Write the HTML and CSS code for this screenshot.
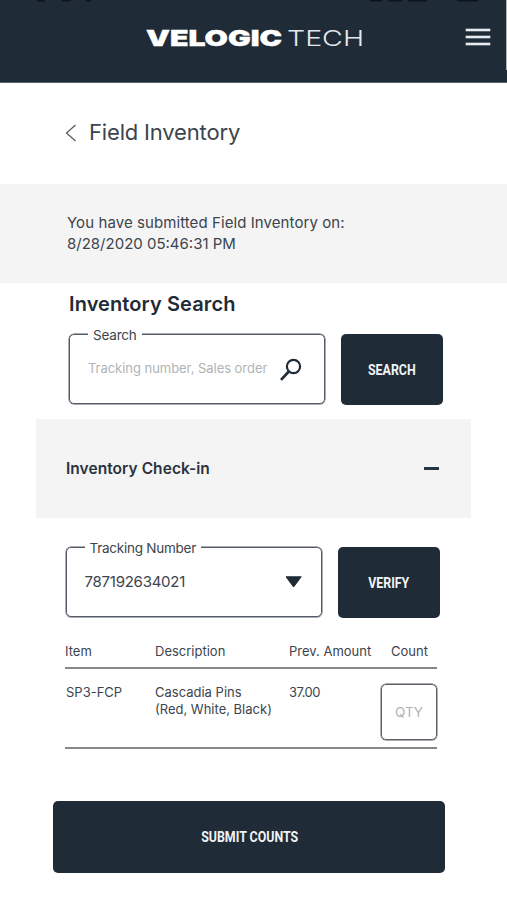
FILE: index.html
```html
<!DOCTYPE html>
<html lang="en">
<head>
<meta charset="utf-8">
<title>Velogic Tech – Field Inventory</title>
<link rel="stylesheet" href="styles.css">
</head>
<body>
<header class="topbar">
  <svg class="status" width="507" height="2" viewBox="0 0 507 2" aria-hidden="true"><path d="M37 0h8M62 0h9M86 0h5M370 0h12M388 0h14M408 0h19M457 0h21"/></svg>
  <svg class="logo" width="224" height="36" viewBox="0 0 224 36">
    <text class="logo-bold" x="1" y="25.5" textLength="136" lengthAdjust="spacingAndGlyphs">VELOGIC</text>
    <text class="logo-light" x="142" y="25.5" textLength="77" lengthAdjust="spacingAndGlyphs">TECH</text>
  </svg>
  <button class="menu" aria-label="Menu"><i></i><i></i><i></i></button>
</header>
<div class="title">
  <svg width="12" height="18" viewBox="0 0 12 18"><path d="M10.5 1L1.5 9l9 8" fill="none" stroke="#555c63" stroke-width="1.3"/></svg>
  <h1>Field Inventory</h1>
</div>
<div class="notice"><p>You have submitted Field Inventory on:<br><span class="date">8/28/2020 05:46:31 PM</span></p></div>
<main>
  <h2>Inventory Search</h2>
  <div class="row search">
    <div class="field">
      <label class="label-search">Search</label>
      <span class="placeholder">Tracking number, Sales order</span>
      <svg class="lens" width="24" height="24" viewBox="0 0 24 24" fill="none" stroke="#1f2b36"><circle cx="14.5" cy="8.5" r="6.6" stroke-width="2.2"/><path d="M9.8 13.5L2 21.8" stroke-width="2.7"/></svg>
    </div>
    <button class="btn"><span>SEARCH</span></button>
  </div>
  <section class="accordion"><h3>Inventory Check-in</h3><i class="minus"></i></section>
  <div class="row verify">
    <div class="field">
      <label class="label-tracking">Tracking Number</label>
      <span class="value">787192634021</span>
      <svg class="caret" width="17" height="12" viewBox="0 0 17 12"><path d="M1 .8h15.2L8.6 11z" fill="#1f2b36" stroke="#1f2b36" stroke-linejoin="round"/></svg>
    </div>
    <button class="btn"><span>VERIFY</span></button>
  </div>
  <div class="table">
    <div class="line head"><span class="c-item">Item</span><span class="c-desc">Description</span><span class="c-prev">Prev. Amount</span><span class="c-count">Count</span></div>
    <div class="line item"><span class="sku">SP3-FCP</span><span class="desc">Cascadia Pins<br><span class="colors">(Red, White, Black)</span></span><span class="amount">37.00</span><span class="qty">QTY</span></div>
  </div>
  <button class="btn submit"><span>SUBMIT COUNTS</span></button>
</main>
</body>
</html>
```
FILE: styles.css
```css
* { box-sizing: border-box; margin: 0; padding: 0; }
body { width: 507px; height: 900px; background: #fff; color: #3c444d; font-family: Inter, "Liberation Sans", sans-serif; overflow: hidden; }
button { border: 0; font: inherit; }
.topbar { position: relative; height: 83px; background: #1f2b36; border-bottom: 1px solid #5a646e; display: flex; align-items: flex-start; justify-content: space-between; padding: 20px 17px 0 145px; }
.status { position: absolute; left: 0; top: 0; stroke: #0f151c; stroke-width: 3; }
.topbar::after { content: ""; position: absolute; right: 0; top: 0; width: 1px; height: 70px; background: #aeb4ba; }
.logo text { fill: #fff; font-size: 22px; }
.logo .logo-bold { font-family: Inter, sans-serif; font-weight: 900; stroke: #fff; stroke-width: .4px; }
.logo .logo-light { font-family: Inter, sans-serif; font-weight: 300; fill: #e3e8ee; }
.menu { width: 24px; padding-top: 9px; background: none; display: grid; gap: 5px; }
.menu i { height: 2px; background: #e9ebf0; box-shadow: 0 0 0 .3px #e9ebf0; }
.title { height: 101px; padding: 0 0 2px 65px; display: flex; align-items: center; gap: 12px; }
.title h1 { margin-top: -2px; font-size: 22px; font-weight: 400; letter-spacing: -.17px; line-height: 28px; }
.notice { height: 99px; background: #f4f4f4; padding: 28px 0 0 67px; font-size: 15px; line-height: 21px; letter-spacing: .08px; }
.date { letter-spacing: 0; }
h2 { height: 51px; padding: 7px 0 0 69px; font-size: 20px; line-height: 28px; font-weight: 600; letter-spacing: .1px; color: #1f2b36; }
.row { display: flex; gap: 16px; }
.search { padding-left: 69px; height: 85px; }
.verify { padding: 29px 0 0 65.5px; height: 118px; }
.field { position: relative; width: 256px; height: 70px; border: 1px solid #555b66; box-shadow: 0 0 0 .5px #555b66; border-radius: 5px; display: flex; align-items: center; }
.field label { position: absolute; left: 18px; top: -9px; background: #fff; padding: 0 5px; font-size: 13.5px; line-height: 18px; white-space: nowrap; }
.field .label-tracking { letter-spacing: -.25px; }
.field .label-search { letter-spacing: -.2px; }
.placeholder { margin: -3px 0 0 18px; font-size: 13px; letter-spacing: -.04px; color: #b1b3b5; white-space: nowrap; }
.lens { margin-left: 12px; margin-top: 2px; }
.value { margin: -1px 0 0 18px; font-size: 15px; letter-spacing: -.25px; }
.caret { position: absolute; left: 218px; top: 28px; }
.btn { width: 102px; height: 71px; border-radius: 5px; background: #1f2b36; color: #f0f4f7; font: 700 15.5px/20px Roboto, sans-serif; display: flex; align-items: center; justify-content: center; }
.btn span { display: block; transform: scaleX(.8); white-space: nowrap; }
.accordion { margin-left: 36px; width: 435px; height: 99px; background: #f4f4f4; display: flex; align-items: center; justify-content: space-between; padding: 0 32px 0 30px; }
.accordion h3 { font-size: 15.5px; font-weight: 600; letter-spacing: .05px; color: #2a333d; }
.minus { width: 15px; height: 3px; background: #253545; }
.table { margin: 0 0 52px 65px; width: 372px; font-size: 13px; }
.line { display: grid; grid-template-columns: 90px 134px 92px 56px; border-bottom: 2px solid #85888b; }
.head { height: 33px; padding-top: 6px; line-height: 18px; }
.c-count { padding-left: 10px; }
.item { height: 80px; padding-top: 15px; line-height: 17px; }
.item > * { white-space: nowrap; }
.sku { padding-left: 1px; }
.amount { letter-spacing: -.55px; }
.item .qty { width: 56px; height: 56px; border: 1px solid #5b6066; box-shadow: 0 0 0 .5px #5b6066; border-radius: 5px; color: #b1b3b5; display: flex; align-items: center; justify-content: center; font-size: 13.5px; }
.submit { margin-left: 53px; width: 392px; height: 72px; }
.submit span { margin-left: 1px; }
```
